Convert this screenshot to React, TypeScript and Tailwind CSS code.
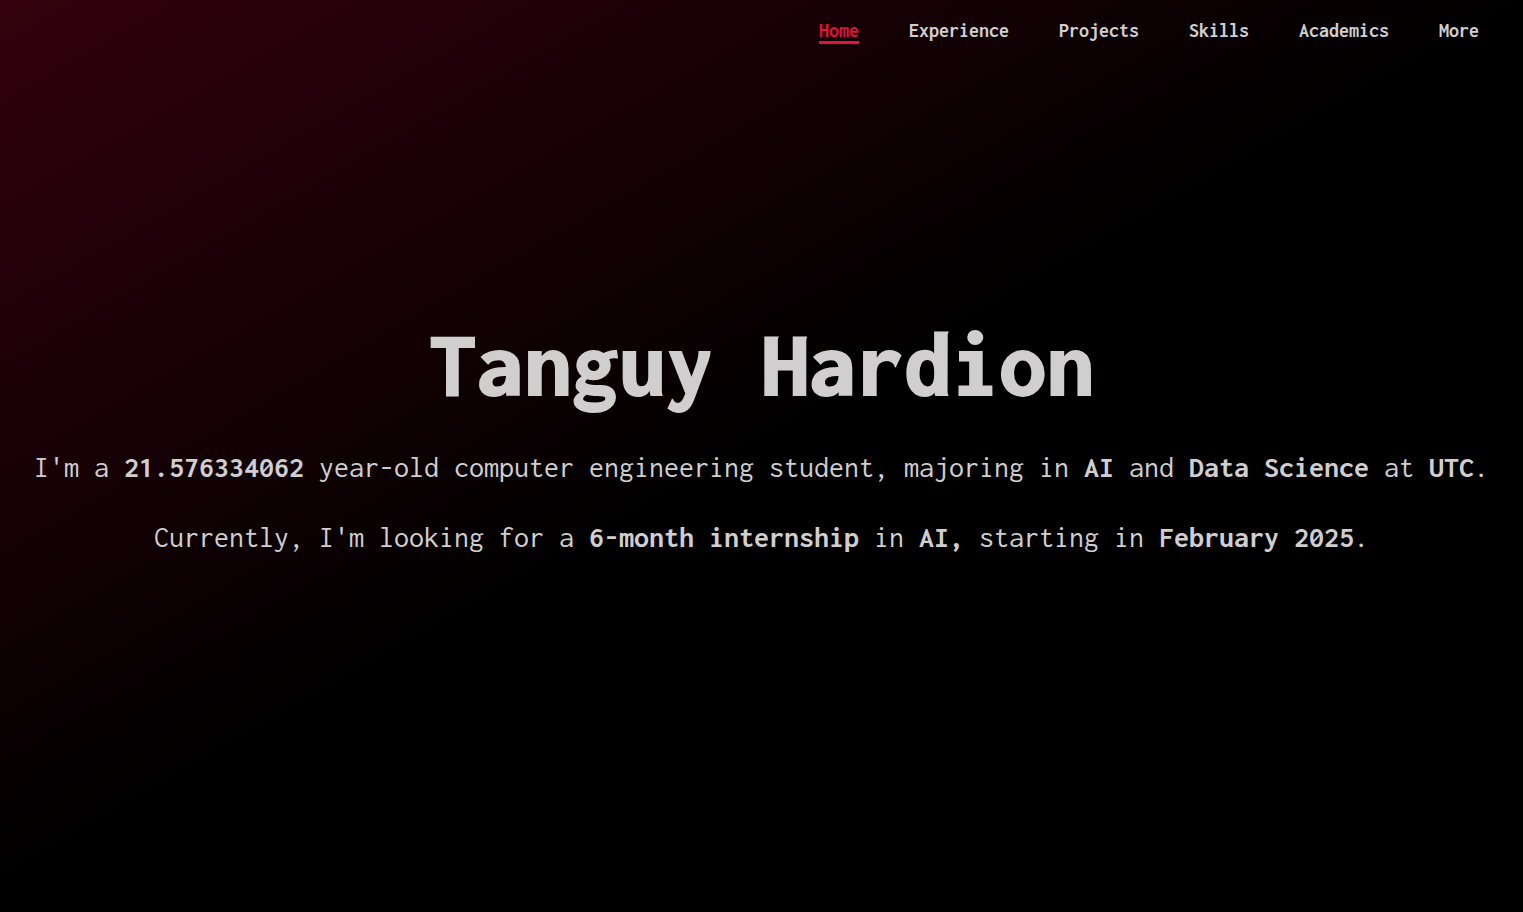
const links = ['Home', 'Experience', 'Projects', 'Skills', 'Academics', 'More'];

export default function App() {
  return (
    <div className="flex min-h-screen flex-col bg-linear-150/srgb from-[#33010d] via-black via-50% to-black font-['Inconsolata','Noto_Sans_Mono_CJK_SC','Liberation_Mono',monospace] text-[#d1cecf]">
      <header className="flex justify-end px-11 pt-5">
        <nav aria-label="Main">
          <ul className="flex gap-[50px] text-[20px] leading-[21px] font-bold">
            {links.map((link, i) => (
              <li key={link}>
                <a
                  href={`#${link.toLowerCase()}`}
                  aria-current={i === 0 ? 'page' : undefined}
                  className={
                    i === 0
                      ? 'block border-b-3 border-[#dc143c] text-[#dc143c]'
                      : 'block border-b-3 border-transparent'
                  }
                >
                  {link}
                </a>
              </li>
            ))}
          </ul>
        </nav>
      </header>
      <main className="flex flex-1 flex-col items-center justify-center gap-[38px] px-4 pb-[90px] text-center">
        <h1 className="text-[95px] leading-[100px] font-black">Tanguy Hardion</h1>
        <div className="flex flex-col gap-10 text-[30px] leading-[30px]">
          <p>
            I'm a <strong>21.576334062</strong> year-old computer engineering student, majoring in{' '}
            <strong>AI</strong> and <strong>Data Science</strong> at <strong>UTC</strong>.
          </p>
          <p>
            Currently, I'm looking for a <strong>6-month internship</strong> in <strong>AI,</strong>{' '}
            starting in <strong>February 2025</strong>.
          </p>
        </div>
      </main>
    </div>
  );
}
